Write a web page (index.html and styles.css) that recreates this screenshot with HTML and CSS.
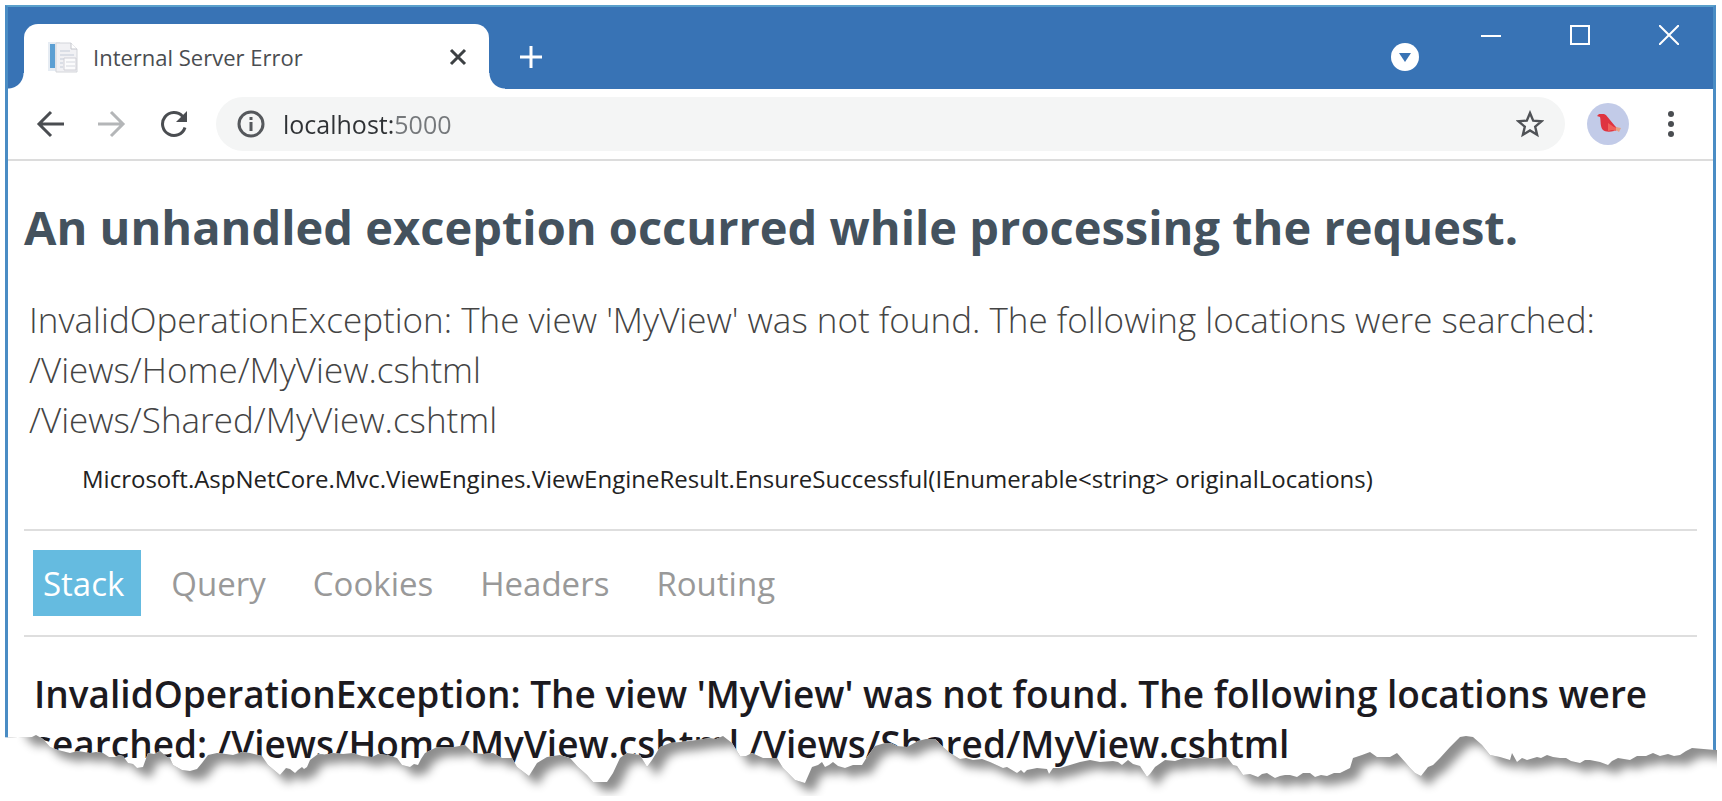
FILE: index.html
```html
<!DOCTYPE html>
<html lang="en">
<head>
<meta charset="utf-8">
<title>Internal Server Error</title>
<link rel="stylesheet" href="styles.css">
</head>
<body>
<div class="page">
  <div class="window">
    <header class="titlebar">
      <div class="tab">
        <svg class="favicon" viewBox="0 0 30 32" aria-hidden="true">
          <rect x="0" y="1" width="12" height="29" fill="#e6ecf3"/>
          <rect x="2" y="3" width="5" height="24" fill="#5b9fd3"/>
          <path d="M8 2h15l6 6v23H8z" fill="#f1f1f4" stroke="#d3d5da"/>
          <path d="M23 2v6h6" fill="#fff" stroke="#c4c6cc"/>
          <path d="M12 10h10M12 14h14M12 18h8M12 22h3M12 26h3" stroke="#c3cbd8"/>
          <path d="M16 17h12v12H16z" fill="#fbfbfc" stroke="#cfcfd6"/>
          <path d="M18 21h9M18 25h9" stroke="#d5d8df"/>
        </svg>
        <span class="tab-title">Internal Server Error</span>
        <button class="icon-button tab-close" aria-label="Close tab">
          <svg width="18" height="18" viewBox="0 0 18 18"><path d="M2 2l14 14M16 2L2 16" stroke="#3c4043" stroke-width="3"/></svg>
        </button>
      </div>
      <button class="icon-button new-tab" aria-label="New tab">
        <svg width="24" height="24" viewBox="0 0 24 24"><path d="M12 1v22M1 12h22" stroke="#fff" stroke-width="3"/></svg>
      </button>
      <button class="icon-button tab-search" aria-label="Search tabs">
        <svg width="28" height="28" viewBox="0 0 28 28"><circle cx="14" cy="14" r="14" fill="#fff"/><path d="M8 10h12l-6 9z" fill="#3873b5"/></svg>
      </button>
      <div class="controls">
        <button class="icon-button" aria-label="Minimize">
          <svg width="20" height="20" viewBox="0 0 20 20"><path d="M0 11h20" stroke="#fff" stroke-width="2"/></svg>
        </button>
        <button class="icon-button" aria-label="Maximize">
          <svg width="20" height="20" viewBox="0 0 20 20"><rect x="1" y="1" width="18" height="18" fill="none" stroke="#fff" stroke-width="2"/></svg>
        </button>
        <button class="icon-button" aria-label="Close">
          <svg width="20" height="20" viewBox="0 0 20 20"><path d="M0 0l20 20M20 0L0 20" stroke="#fff" stroke-width="2"/></svg>
        </button>
      </div>
    </header>

    <div class="toolbar">
      <button class="icon-button" aria-label="Back">
        <svg width="28" height="28" viewBox="0 0 28 28"><path d="M28 14H3M15 2L3 14l12 12" fill="none" stroke="#4a4d51" stroke-width="3"/></svg>
      </button>
      <button class="icon-button" aria-label="Forward">
        <svg width="28" height="28" viewBox="0 0 28 28"><path d="M0 14h25M13 2l12 12-12 12" fill="none" stroke="#b4b6b8" stroke-width="3"/></svg>
      </button>
      <button class="icon-button" aria-label="Reload">
        <svg width="28" height="28" viewBox="0 0 28 28"><path d="M25 17.500A11.500 11.500 0 1 1 22.500 6.200" fill="none" stroke="#4a4d51" stroke-width="3"/><path d="M27 1v11H16z" fill="#4a4d51"/></svg>
      </button>
      <div class="omnibox">
        <svg width="28" height="28" viewBox="0 0 28 28" aria-hidden="true"><circle cx="14" cy="14" r="12" fill="none" stroke="#55585c" stroke-width="3"/><path d="M14 12v9M14 7v3" stroke="#55585c" stroke-width="3"/></svg>
        <input class="address" type="text" aria-label="Address" value="localhost:5000">
        <button class="icon-button" aria-label="Bookmark this page">
          <svg width="28" height="28" viewBox="0 0 28 28"><path d="M14 3l3.200 7.600 8.300.7-6.300 5.400 1.900 8.100L14 20.500l-7.100 4.300 1.900-8.100-6.300-5.400 8.300-.7z" fill="none" stroke="#4f5256" stroke-width="2.400"/></svg>
        </button>
      </div>
      <button class="icon-button profile" aria-label="Profile">
        <svg width="42" height="42" viewBox="0 0 42 42"><circle cx="21" cy="21" r="21" fill="#c2cbe8"/><path d="M10 13l2-2h5c3 1 4 4 6 6l5 6 2 2-3 3c-4 1-9 1-11-1-3-3-2-9-3-13z" fill="#df3440"/><path d="M21 20l6 4 4 1-2 3-4-1-4 1z" fill="#f0625a"/><path d="M29 24l5 1-2 4-3-2z" fill="#e6a184"/></svg>
      </button>
      <button class="icon-button" aria-label="Menu">
        <svg width="8" height="28" viewBox="0 0 8 28"><g fill="#4a4d51"><circle cx="4" cy="4" r="3"/><circle cx="4" cy="14" r="3"/><circle cx="4" cy="24" r="3"/></g></svg>
      </button>
    </div>

    <main class="content">
      <h1 class="headline">An unhandled exception occurred while processing the request.</h1>
      <p class="message">InvalidOperationException: The view 'MyView' was not found. The following locations were searched:<br>/Views/Home/MyView.cshtml<br>/Views/Shared/MyView.cshtml</p>
      <p class="location">Microsoft.AspNetCore.Mvc.ViewEngines.ViewEngineResult.EnsureSuccessful(IEnumerable&lt;string&gt; originalLocations)</p>
      <nav class="sections">
        <button class="section active">Stack</button>
        <button class="section">Query</button>
        <button class="section">Cookies</button>
        <button class="section">Headers</button>
        <button class="section">Routing</button>
      </nav>
      <h2 class="stack-title">InvalidOperationException: The view 'MyView' was not found. The following locations were searched: /Views/Home/MyView.cshtml /Views/Shared/MyView.cshtml</h2>
    </main>
  </div>

  <svg class="torn-edge" viewBox="0 730 1722 71" preserveAspectRatio="none" aria-hidden="true">
    <defs>
      <path id="gap" d="M0 737L18 738L32 737L36 735L43 739L50 747L58 750L70 753L78 751L90 753L96 752L103 753L109 757L115 757L119 755L123 756L128 763L133 764L137 768L143 767L148 753L154 754L160 751L167 757L170 758L173 765L182 770L190 771L197 769L202 763L208 755L217 753L226 754L233 755L242 752L250 753L262 756L268 765L280 775L286 768L290 769L295 773L298 770L302 767L304 769L307 767L310 760L318 754L325 755L333 753L343 754L353 753L362 756L372 757L378 754L387 755L397 758L402 765L410 767L414 764L418 765L421 759L425 753L437 747L443 747L454 747L465 745L473 753L483 754L493 753L502 758L512 758L517 767L529 776L537 763L547 757L560 755L570 758L578 767L587 775L593 782L607 782L613 773L620 758L627 753L640 755L647 767L652 760L660 747L670 743L690 741L710 738L716 739L723 736L732 743L740 756L746 756L752 753L763 758L777 758L783 768L795 780L805 783L812 767L818 765L822 762L825 767L829 765L833 762L838 766L845 768L853 765L862 765L867 757L875 746L885 743L891 743L897 746L907 747L918 741L926 739L935 739L943 747L950 753L960 759L966 758L973 760L982 759L990 762L1003 768L1007 767L1017 773L1021 770L1024 773L1027 770L1037 768L1047 769L1049 774L1053 768L1060 768L1070 765L1080 762L1090 760L1100 762L1113 761L1118 762L1122 765L1128 760L1133 764L1140 766L1147 777L1150 774L1155 767L1165 760L1175 761L1184 758L1193 759L1204 757L1214 759L1227 757L1233 765L1237 766L1243 775L1250 774L1258 777L1262 774L1267 773L1275 778L1280 776L1285 775L1290 775L1297 777L1303 773L1310 773L1315 777L1321 775L1327 776L1334 773L1340 773L1350 768L1353 758L1362 755L1370 752L1377 757L1390 757L1397 753L1405 762L1410 768L1415 773L1421 776L1428 767L1433 765L1440 758L1450 747L1460 737L1466 736L1473 737L1482 745L1490 755L1500 757L1510 760L1512 753L1517 762L1522 758L1527 760L1537 757L1541 758L1547 755L1553 757L1560 758L1566 758L1571 761L1580 763L1585 760L1590 760L1600 762L1608 765L1612 761L1618 758L1630 760L1637 756L1646 756L1653 753L1660 756L1668 754L1674 756L1680 755L1686 751L1692 748L1715 750L1722 750V850H0z"/>
      <clipPath id="gap-clip"><use href="#gap"/></clipPath>
      <clipPath id="shadow-clip"><rect x="8" y="730" width="1709" height="66"/></clipPath>
      <filter id="soften" color-interpolation-filters="sRGB" filterUnits="userSpaceOnUse" x="-60" y="680" width="1840" height="180"><feGaussianBlur stdDeviation="5"/></filter>
    </defs>
    <use href="#gap" fill="#fff"/>
    <g clip-path="url(#gap-clip)">
      <g clip-path="url(#shadow-clip)">
        <rect y="730" width="1722" height="66" fill="#8e8e8e"/>
        <g filter="url(#soften)" fill="#fff">
          <use href="#gap" x="9" y="9"/>
          <path d="M-60 690H26V738L60 765V850H-60z"/>
        </g>
      </g>
    </g>
  </svg>
</div>
</body>
</html>
```
FILE: styles.css
```css
* {
  box-sizing: border-box;
}

body {
  margin: 0;
  background: #fff;
  color: #222;
  font-family: "Open Sans", "Noto Sans", sans-serif;
}

.page {
  position: relative;
  display: flex;
  min-height: 100vh;
  padding: 5px 6px 0 5px;
  overflow: hidden;
}

.window {
  flex: 1;
  min-width: 0;
  border: 3px solid #4a8cc4;
  border-top: 2px solid #5aa0cc;
  border-bottom: 0;
}

.icon-button {
  display: flex;
  padding: 0;
  border: 0;
  background: none;
}

/* Title bar */
.titlebar {
  display: flex;
  height: 82px;
  padding-left: 16px;
  background: #3873b5;
}

.tab {
  position: relative;
  display: flex;
  align-items: center;
  gap: 15px;
  width: 465px;
  height: 65px;
  margin-top: 17px;
  padding: 0 22px 0 24px;
  border-radius: 14px 14px 0 0;
  background: #fff;
}

.tab::before,
.tab::after {
  content: "";
  position: absolute;
  bottom: 0;
  width: 16px;
  height: 16px;
}

.tab::before {
  right: 100%;
  background: radial-gradient(circle at 0 0, #3873b5 15px, #fff 16px);
}

.tab::after {
  left: 100%;
  background: radial-gradient(circle at 100% 0, #3873b5 15px, #fff 16px);
}

.favicon {
  width: 30px;
  height: 32px;
}

.tab-title {
  flex: 1;
  color: #4a4d51;
  font-size: 22px;
}

.new-tab {
  align-self: center;
  margin: 17px 0 0 30px;
}

.tab-search {
  align-self: center;
  margin: 17px 62px 0 auto;
}

.controls {
  display: flex;
  gap: 69px;
  padding: 18px 34px 0 0;
  height: 40px;
  align-items: flex-start;
}

/* Toolbar */
.toolbar {
  display: flex;
  align-items: center;
  gap: 34px;
  height: 72px;
  padding: 0 38px 0 28px;
  border-bottom: 2px solid #dcdcdc;
}

.omnibox {
  display: flex;
  flex: 1;
  align-items: center;
  gap: 18px;
  height: 54px;
  margin: 0 -12px 0 -6px;
  padding: 0 21px;
  border-radius: 27px;
  background: #f4f5f5;
}

.address {
  flex: 1;
  min-width: 0;
  padding: 0;
  border: 0;
  outline: 0;
  background: linear-gradient(90deg, #2f3235 112px, #75787b 112px);
  background-clip: text;
  color: transparent;
  font: 25px "Open Sans", "Noto Sans", sans-serif;
}

.profile {
  margin-right: 4px;
}

/* Error page */
.content {
  padding: 31px 16px 0 16px;
}

.headline {
  margin: 0;
  color: #44525e;
  font-size: 47px;
  font-weight: 700;
  line-height: 70px;
}

.message {
  margin: 33px 0 0;
  padding-left: 5px;
  color: #444;
  font-size: 35px;
  font-weight: 300;
  line-height: 50px;
}

.location {
  margin: 16px 0 32px;
  padding-left: 58px;
  font-size: 24px;
  line-height: 36px;
}

.sections {
  display: flex;
  gap: 20px;
  padding: 19px 9px;
  border: solid #dedede;
  border-width: 2px 0;
}

.section {
  height: 66px;
  padding: 0 17px 0 10px;
  border: 0;
  background: none;
  color: #999;
  font: 33px "Open Sans", "Noto Sans", sans-serif;
}

.section.active {
  background: #65bbe0;
  color: #fff;
}

.stack-title {
  margin: 32px 0 0;
  padding: 0 10px;
  color: #1c1a1f;
  font-size: 37px;
  font-weight: 600;
  line-height: 50px;
}

.torn-edge {
  position: absolute;
  bottom: 0;
  left: 0;
  width: 100%;
  height: 71px;
}
```
